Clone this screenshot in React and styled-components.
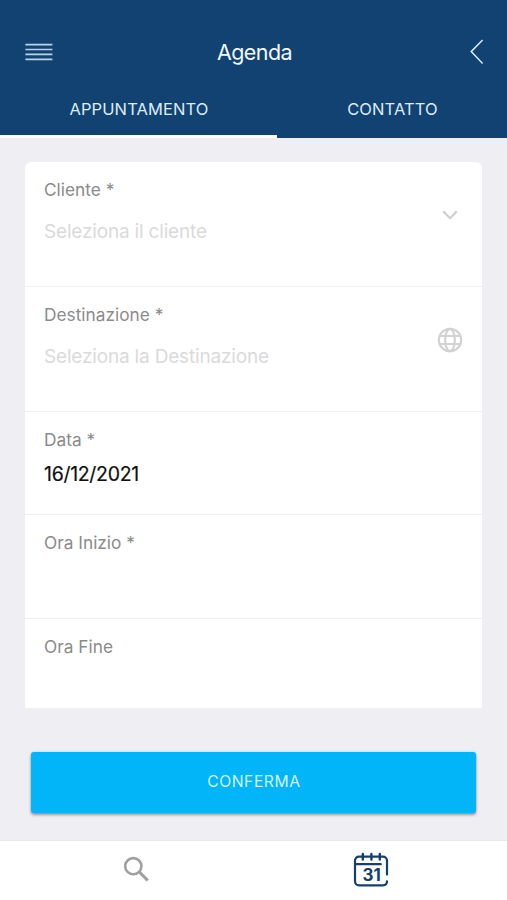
import React from "react";
import styled, { createGlobalStyle } from "styled-components";

const GlobalStyle = createGlobalStyle`
  *, *::before, *::after { box-sizing: border-box; }
  body { margin: 0; background: #efeef3; font-family: Inter, "Liberation Sans", sans-serif; }
  button { font: inherit; border: 0; padding: 0; background: none; color: inherit; }
  svg { display: block; }
`;

const Screen = styled.div`
  width: 100%;
  height: 900px;
  display: flex;
  flex-direction: column;
  background: #efeef3;
  overflow: hidden;
`;

const Header = styled.header`
  height: 137.5px;
  flex: none;
  display: flex;
  flex-direction: column;
  background: #124272;
  color: #f1f8fd;
`;

const TitleBar = styled.div`
  height: 56px;
  margin-top: 24px;
  padding: 0 23px 0 25px;
  display: grid;
  grid-template-columns: 28px 1fr 14px;
  align-items: center;
`;

const Title = styled.h1`
  margin: 0;
  padding: 0 14px 0 0;
  text-align: center;
  font-size: 21.5px;
  line-height: 28px;
  font-weight: 400;
  letter-spacing: -0.55px;
`;

const Tabs = styled.nav`
  flex: 1;
  display: grid;
  grid-template-columns: 277px 1fr;
`;

const Tab = styled.button`
  padding: 3px 0 0 1px;
  border-bottom: 3px solid ${(p) => (p.$active ? "#fff" : "transparent")};
  font-size: 16.5px;
  line-height: 20px;
  color: #dcecf8;
  letter-spacing: 0.1px;
`;

const Main = styled.main`
  flex: 1;
  padding: 24.5px 25px 0 25px;
`;

const Card = styled.section`
  height: 546px;
  background: #fff;
  border-radius: 6px 6px 1px 1px;
  display: grid;
  grid-template-rows: 125px 125px 103px 104px 1fr;
`;

const Field = styled.div`
  display: flex;
  justify-content: space-between;
  padding: 17px 19.5px 0 19px;
  border-bottom: 1px solid #efeff1;
  &:last-child { border-bottom: 0; }
`;

const Label = styled.div`
  font-size: 17.3px;
  line-height: 22px;
  color: #8b8b8b;
`;

const Placeholder = styled.div`
  margin-top: 20px;
  font-size: 19px;
  line-height: 22px;
  color: #dadada;
  letter-spacing: -0.18px;
`;

const Value = styled.div`
  margin-top: 12px;
  font-size: 19.5px;
  line-height: 22px;
  color: #111;
  letter-spacing: -0.3px;
  -webkit-text-stroke: 0.2px #111;
`;

const FieldIcon = styled.div`
  width: 26px;
  height: 26px;
  margin-top: 22.5px;
`;

const Confirm = styled.button`
  display: block;
  width: 445px;
  height: 61px;
  margin: 43.5px 0 0 6.4px;
  padding-bottom: 1px;
  border-radius: 3px;
  background: #02b5f8;
  color: #d2f4ff;
  font-size: 15.7px;
  letter-spacing: 0.55px;
  box-shadow: 0 2px 3px rgba(0, 0, 0, 0.36), 0 0 3px rgba(0, 0, 0, 0.13);
`;

const Footer = styled.footer`
  height: 60px;
  flex: none;
  display: grid;
  grid-template-columns: 271px 200px 1fr;
  justify-items: center;
  background: #fff;
  border-top: 1px solid #e9e9ec;
`;

const FooterItem = styled.button`
  width: 36px;
  height: 36px;
  margin-top: 10.5px;
`;

const MenuIcon = () => (
  <svg width="28" height="18" viewBox="0 0 28 18" stroke="#b9d3e8" strokeWidth="1.7">
    <path d="M.4 1.6H27.4M.4 6.5H27.4M.4 11.4H27.4M.4 16.3H27.4" />
  </svg>
);

const BackIcon = () => (
  <svg width="14" height="26" viewBox="0 0 14 26" fill="none" stroke="#d6eafa" strokeWidth="1.5">
    <path d="M12.6 1 1.2 12.6 12.6 24.5" />
  </svg>
);

const ChevronIcon = () => (
  <svg width="26" height="26" viewBox="0 0 26 26" fill="none" stroke="#d0d0d0" strokeWidth="2.3">
    <path d="m6.3 9.4 6.7 6.8 6.7-6.8" />
  </svg>
);

const GlobeIcon = () => (
  <svg width="26" height="26" viewBox="0 0 26 26" fill="none" stroke="#d2d2d2" strokeWidth="2.2">
    <circle cx="13" cy="13" r="11.2" />
    <ellipse cx="13" cy="13" rx="4.8" ry="11.2" />
    <path d="M2.3 9H23.7M2.3 17H23.7" />
  </svg>
);

const SearchIcon = () => (
  <svg width="36" height="36" viewBox="0 0 36 36" fill="none" stroke="#a0a0a0">
    <circle cx="15.3" cy="14.2" r="8.1" strokeWidth="2.6" />
    <path d="m21.4 20 8.3 8.5" strokeWidth="3.2" />
  </svg>
);

const CalendarIcon = () => (
  <svg width="36" height="36" viewBox="0 0 36 36" fill="none" stroke="#15406c" strokeWidth="2.2" strokeLinecap="round">
    <path d="M34 22.6V8.6a4 4 0 0 0-4-4H6a4 4 0 0 0-4 4V29.3a4 4 0 0 0 4 4H30q4 0 4-4" />
    <path d="M3 12.2H27.8" />
    <path d="M9.8 2V7.6M18.4 2V7.6M26.8 2V7.6" strokeWidth="2.4" />
    <text x="18.6" y="28.5" textAnchor="middle" fill="#15406c" stroke="none" fontFamily="Inter, sans-serif" fontSize="17" fontWeight="700">31</text>
  </svg>
);

export default function App() {
  return (
    <>
      <GlobalStyle />
      <Screen>
        <Header>
          <TitleBar>
            <MenuIcon />
            <Title>Agenda</Title>
            <BackIcon />
          </TitleBar>
          <Tabs>
            <Tab $active>APPUNTAMENTO</Tab>
            <Tab>CONTATTO</Tab>
          </Tabs>
        </Header>
        <Main>
          <Card>
            <Field>
              <div>
                <Label>Cliente *</Label>
                <Placeholder>Seleziona il cliente</Placeholder>
              </div>
              <FieldIcon><ChevronIcon /></FieldIcon>
            </Field>
            <Field>
              <div>
                <Label>Destinazione *</Label>
                <Placeholder>Seleziona la Destinazione</Placeholder>
              </div>
              <FieldIcon><GlobeIcon /></FieldIcon>
            </Field>
            <Field>
              <div>
                <Label>Data *</Label>
                <Value>16/12/2021</Value>
              </div>
            </Field>
            <Field><Label>Ora Inizio *</Label></Field>
            <Field><Label>Ora Fine</Label></Field>
          </Card>
          <Confirm>CONFERMA</Confirm>
        </Main>
        <Footer>
          <FooterItem aria-label="Cerca"><SearchIcon /></FooterItem>
          <FooterItem aria-label="Agenda"><CalendarIcon /></FooterItem>
        </Footer>
      </Screen>
    </>
  );
}
